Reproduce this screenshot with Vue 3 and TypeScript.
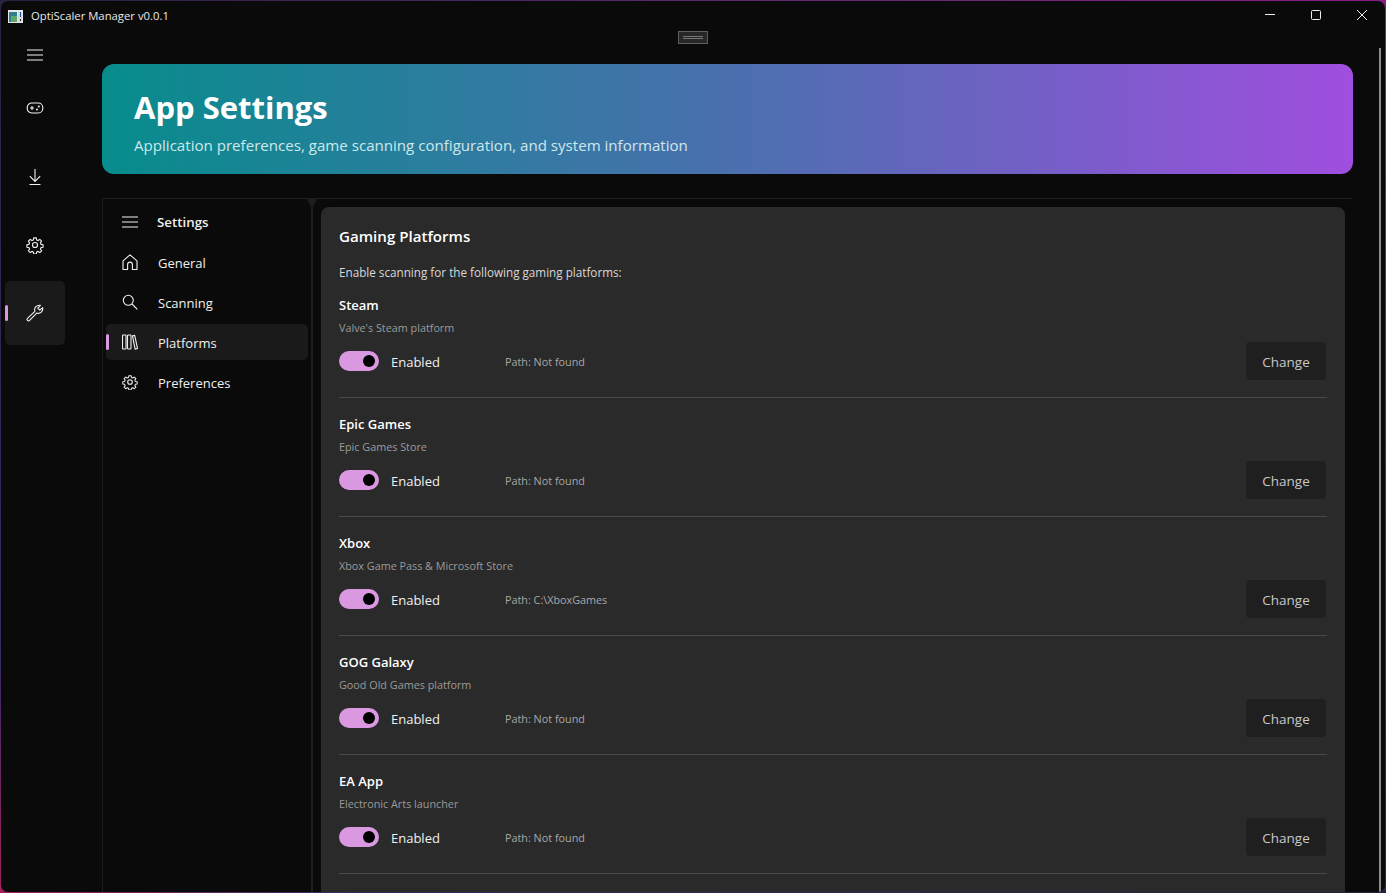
<template>
  <div class="window-frame">
    <div class="window">
      <header class="titlebar">
        <div class="app-title">
          <svg class="app-icon" width="15" height="13" viewBox="0 0 15 13">
            <rect width="15" height="13" fill="#e8e8e8" />
            <rect x="1" y="2" width="8" height="10" fill="#2f7f8f" />
            <rect x="3" y="6" width="6" height="6" fill="#5fa86a" />
            <rect x="10" y="2" width="4" height="10" fill="#cfd8dc" />
            <rect x="12" y="2" width="1" height="5" fill="#1b4f9c" />
            <rect x="12" y="9" width="1" height="2" fill="#2a2a2a" />
          </svg>
          <span class="app-name">OptiScaler Manager v0.0.1</span>
        </div>
        <div class="window-buttons">
          <svg width="46" height="32" viewBox="0 0 46 32"><path d="M18 14.5h10" stroke="#f0f0f0" fill="none" /></svg>
          <svg width="46" height="32" viewBox="0 0 46 32"><rect x="18.5" y="10.5" width="9" height="9" rx="1" stroke="#f0f0f0" fill="none" /></svg>
          <svg width="46" height="32" viewBox="0 0 46 32"><path d="M18 10l10 10M28 10l-10 10" stroke="#f0f0f0" fill="none" /></svg>
        </div>
      </header>

      <div class="drag-handle"><i /><i /></div>

      <div class="body">
        <aside class="rail">
          <button class="rail-btn rail-menu">
            <svg width="16" height="16" viewBox="0 0 16 16" class="icon"><path d="M0 3h16M0 8h16M0 13h16" /></svg>
          </button>
          <button class="rail-btn">
            <svg width="18" height="14" viewBox="0 0 18 14" class="icon">
              <rect x="1.2" y="2" width="15.6" height="10" rx="4.5" />
              <path d="M4 7h4M6 5v4" />
              <circle cx="12.8" cy="5.6" r="1" fill="#f2f2f2" stroke="none" />
              <circle cx="11" cy="8.4" r="1" fill="#f2f2f2" stroke="none" />
            </svg>
          </button>
          <button class="rail-btn rail-download">
            <svg width="14" height="18" viewBox="0 0 14 18" class="icon"><path d="M7 1v12M1.8 8.2L7 13.4l5.2-5.2M1.5 16.5h11" /></svg>
          </button>
          <button class="rail-btn">
            <svg width="18" height="18" viewBox="0 0 24 24" class="icon icon-thin">
              <path d="M10.3 2.5h3.4l.5 2.8 1.9.8 2.3-1.6 2.4 2.4-1.6 2.3.8 1.9 2.8.5v3.4l-2.8.5-.8 1.9 1.6 2.3-2.4 2.4-2.3-1.6-1.9.8-.5 2.8h-3.4l-.5-2.8-1.9-.8-2.3 1.6-2.4-2.4 1.6-2.3-.8-1.9-2.8-.5v-3.4l2.8-.5.8-1.9-1.6-2.3 2.4-2.4 2.3 1.6 1.9-.8z" stroke-linejoin="round" />
              <circle cx="12" cy="12" r="3.4" />
            </svg>
          </button>
          <button class="rail-btn active">
            <svg width="18" height="18" viewBox="0 0 18 18" class="icon">
              <path d="M16.6 3.6L13.8 6.2 11.8 4.2 14.4 1.4A4.6 4.6 0 0 0 8.9 7.3L1.5 14.3a1.5 1.5 0 0 0 0 2.1 1.5 1.5 0 0 0 2.1 0L10.7 9.1A4.6 4.6 0 0 0 16.6 3.6z" stroke-linejoin="round" />
            </svg>
          </button>
        </aside>

        <main class="main">
          <section class="hero">
            <h1>App Settings</h1>
            <p>Application preferences, game scanning configuration, and system information</p>
          </section>

          <div class="split">
            <nav class="side">
              <div class="side-item side-head">
                <svg width="16" height="16" viewBox="0 0 16 16" class="icon"><path d="M0 3h16M0 8h16M0 13h16" /></svg>
                <span>Settings</span>
              </div>
              <div v-for="item in navItems" :key="item.label" class="side-item" :class="{ active: item.active }">
                <svg width="16" height="16" viewBox="0 0 16 16" class="icon" v-html="item.icon" />
                <span class="side-label">{{ item.label }}</span>
              </div>
            </nav>
            <div class="splitter" />
            <div class="content">
              <section class="card">
                <h2>Gaming Platforms</h2>
                <p class="lead">Enable scanning for the following gaming platforms:</p>
                <div v-for="p in platforms" :key="p.name" class="platform">
                  <h3>{{ p.name }}</h3>
                  <p class="desc">{{ p.desc }}</p>
                  <div class="controls">
                    <span class="toggle"><i /></span>
                    <span class="state">Enabled</span>
                    <span class="path">Path: {{ p.path }}</span>
                    <button class="change">Change</button>
                  </div>
                </div>
              </section>
            </div>
          </div>
        </main>
      </div>

      <div class="scrollbar" />
    </div>
  </div>
</template>

<script setup lang="ts">
interface NavItem {
  label: string
  icon: string
  active?: boolean
}

interface Platform {
  name: string
  desc: string
  path: string
}

const gear =
  '<path transform="scale(0.667)" d="M10.3 2.5h3.4l.5 2.8 1.9.8 2.3-1.6 2.4 2.4-1.6 2.3.8 1.9 2.8.5v3.4l-2.8.5-.8 1.9 1.6 2.3-2.4 2.4-2.3-1.6-1.9.8-.5 2.8h-3.4l-.5-2.8-1.9-.8-2.3 1.6-2.4-2.4 1.6-2.3-.8-1.9-2.8-.5v-3.4l2.8-.5.8-1.9-1.6-2.3 2.4-2.4 2.3 1.6 1.9-.8z" stroke-width="1.5" stroke-linejoin="round"/><circle cx="8" cy="8" r="2.3"/>'

const navItems: NavItem[] = [
  { label: 'General', icon: '<path d="M1 6.8L8 .9l7 5.9v8.7h-4.6v-5a2.4 2.4 0 0 0-4.8 0v5H1z" stroke-linejoin="round"/>' },
  { label: 'Scanning', icon: '<circle cx="6.3" cy="6.3" r="5"/><path d="M10 10l5.3 5.3"/>' },
  {
    label: 'Platforms',
    active: true,
    icon: '<rect x="0.5" y="1" width="3.5" height="14" rx="0.8"/><rect x="5.5" y="1" width="3.5" height="14" rx="0.8"/><path d="M10.5 1.8l2.2-.4 2.8 13.1-2.4.6z" stroke-linejoin="round"/>',
  },
  { label: 'Preferences', icon: gear },
]

const platforms: Platform[] = [
  { name: 'Steam', desc: "Valve's Steam platform", path: 'Not found' },
  { name: 'Epic Games', desc: 'Epic Games Store', path: 'Not found' },
  { name: 'Xbox', desc: 'Xbox Game Pass & Microsoft Store', path: 'C:\\XboxGames' },
  { name: 'GOG Galaxy', desc: 'Good Old Games platform', path: 'Not found' },
  { name: 'EA App', desc: 'Electronic Arts launcher', path: 'Not found' },
]
</script>

<style>
html,
body {
  margin: 0;
  height: 100%;
  overflow: hidden;
  background: #0a0a0a;
}
</style>

<style scoped>
.window-frame {
  height: 100vh;
  box-sizing: border-box;
  padding: 1px;
  background: linear-gradient(35deg, #a0205a 0%, #3b2a63 12%, #2a2140 50%, #5a2a70 75%, #8a1f86 100%);
  font-family: "Open Sans", "Noto Sans", sans-serif;
  color: #fff;
}

.window {
  position: relative;
  height: 100%;
  display: flex;
  flex-direction: column;
  background: #0a0a0a;
  border-radius: 7px;
  overflow: hidden;
}

.titlebar {
  display: flex;
  align-items: center;
  justify-content: space-between;
  height: 30px;
  flex: none;
}

.app-title {
  display: flex;
  align-items: center;
  gap: 8px;
  padding-left: 7px;
  font-size: 11.3px;
  color: #e8e8e8;
}

.app-name {
  padding-bottom: 2px;
}

.app-icon {
  display: block;
}

.window-buttons {
  display: flex;
}

.window-buttons svg {
  display: block;
}

.drag-handle {
  position: absolute;
  left: 677px;
  top: 30px;
  width: 28px;
  height: 11px;
  border: 1px solid #5e5e5e;
  background: #272727;
  display: flex;
  flex-direction: column;
  align-items: center;
  justify-content: center;
  gap: 1px;
}

.drag-handle i {
  display: block;
  width: 20px;
  height: 1px;
  background: #767676;
}

.body {
  flex: 1;
  display: flex;
  min-height: 0;
}

.rail {
  width: 69px;
  flex: none;
  box-sizing: border-box;
  padding: 0 5px 0 4px;
  display: flex;
  flex-direction: column;
  align-items: stretch;
}

.rail-btn {
  position: relative;
  height: 68px;
  flex: none;
  display: flex;
  align-items: center;
  justify-content: center;
  background: none;
  border: none;
  padding: 0;
  border-radius: 5px;
}

.rail-menu {
  height: 43px;
  padding-top: 5px;
  box-sizing: border-box;
}

.rail-download {
  margin-top: 1px;
}

.rail-btn.active {
  height: 64px;
  margin-top: 2px;
  background: #1a1a1a;
}

.rail-btn.active::before,
.side-item.active::before {
  content: "";
  position: absolute;
  left: 0;
  top: 50%;
  width: 3px;
  height: 16px;
  margin-top: -8px;
  border-radius: 2px;
  background: #d998e0;
}

.icon {
  display: block;
  fill: none;
  stroke: #f2f2f2;
  stroke-width: 1.1;
}

.icon-thin {
  stroke-width: 1.5;
}

.main {
  flex: 1;
  min-width: 0;
  display: flex;
  flex-direction: column;
  padding: 33px 32px 0 32px;
}

.hero {
  height: 110px;
  flex: none;
  box-sizing: border-box;
  padding: 23px 32px 0;
  border-radius: 12px;
  background: linear-gradient(90deg, #078c8c 0%, #4a70ae 50%, #a04edf 100%);
}

.hero h1 {
  margin: 0;
  font-size: 31px;
  line-height: 40px;
  font-weight: 700;
}

.hero p {
  margin: 7px 0 0;
  font-size: 15.1px;
  line-height: 22px;
  color: #cfe8ec;
}

.split {
  flex: 1;
  min-height: 0;
  display: flex;
  margin-top: 24px;
  border-top: 1px solid #1d1d1d;
}

.side {
  width: 209px;
  flex: none;
  box-sizing: border-box;
  padding: 5px 3px 0 3px;
  border-left: 1px solid #1d1d1d;
  display: flex;
  flex-direction: column;
  gap: 4px;
}

.side-item {
  position: relative;
  height: 36px;
  flex: none;
  display: flex;
  align-items: center;
  gap: 20px;
  padding-left: 16px;
  border-radius: 5px;
  font-size: 13px;
  color: #f0f0f0;
}

.side-label {
  padding-top: 2px;
}

.side-head {
  font-weight: 600;
  gap: 19px;
  font-size: 13.3px;
}

.side-item.active {
  background: #1a1a1a;
}

.splitter {
  position: relative;
  width: 2px;
  flex: none;
  background: #1d1d1d;
}

.splitter::before {
  content: "";
  position: absolute;
  left: -4px;
  top: 0;
  width: 10px;
  height: 8px;
  background: #1d1d1d;
  clip-path: polygon(0 0, 100% 0, 60% 100%, 40% 100%);
}

.content {
  flex: 1;
  min-width: 0;
  padding: 8px 8px 0;
}

.card {
  box-sizing: border-box;
  height: 100%;
  padding: 19px 18px 0;
  background: #2a2a2a;
  border-radius: 8px 8px 0 0;
}

.card h2 {
  margin: 0;
  font-size: 15.1px;
  line-height: 20px;
  font-weight: 600;
}

.lead {
  margin: 19px 0 0;
  font-size: 11.7px;
  line-height: 14px;
  color: #d8d8d8;
}

.platform {
  height: 119px;
  box-sizing: border-box;
  padding-top: 16px;
  border-bottom: 1px solid #4a4a4a;
}

.platform h3 {
  margin: 0;
  font-size: 13px;
  line-height: 20px;
  font-weight: 600;
}

.desc {
  margin: 5px 0 0;
  font-size: 10.8px;
  line-height: 16px;
  color: #9a9a9a;
}

.controls {
  display: flex;
  align-items: center;
  margin-top: 6px;
  height: 38px;
}

.toggle {
  width: 40px;
  height: 20px;
  border-radius: 10px;
  background: #d998e0;
  display: flex;
  align-items: center;
  justify-content: flex-end;
  padding-right: 4px;
  box-sizing: border-box;
}

.toggle i {
  display: block;
  width: 12px;
  height: 12px;
  border-radius: 50%;
  background: #000;
}

.state {
  margin-left: 12px;
  width: 114px;
  padding-top: 2px;
  font-size: 13px;
  color: #f0f0f0;
}

.path {
  flex: 1;
  font-size: 10.8px;
  color: #a8a8a8;
}

.change {
  width: 80px;
  height: 38px;
  margin-right: 1px;
  padding: 2px 0 0;
  background: #1f1f1f;
  border: none;
  border-radius: 4px;
  color: #c8c8c8;
  font-family: inherit;
  font-size: 13.5px;
}

.scrollbar {
  position: absolute;
  right: 4px;
  top: 47px;
  bottom: 0;
  width: 2px;
  background: #8c8c8c;
}
</style>
